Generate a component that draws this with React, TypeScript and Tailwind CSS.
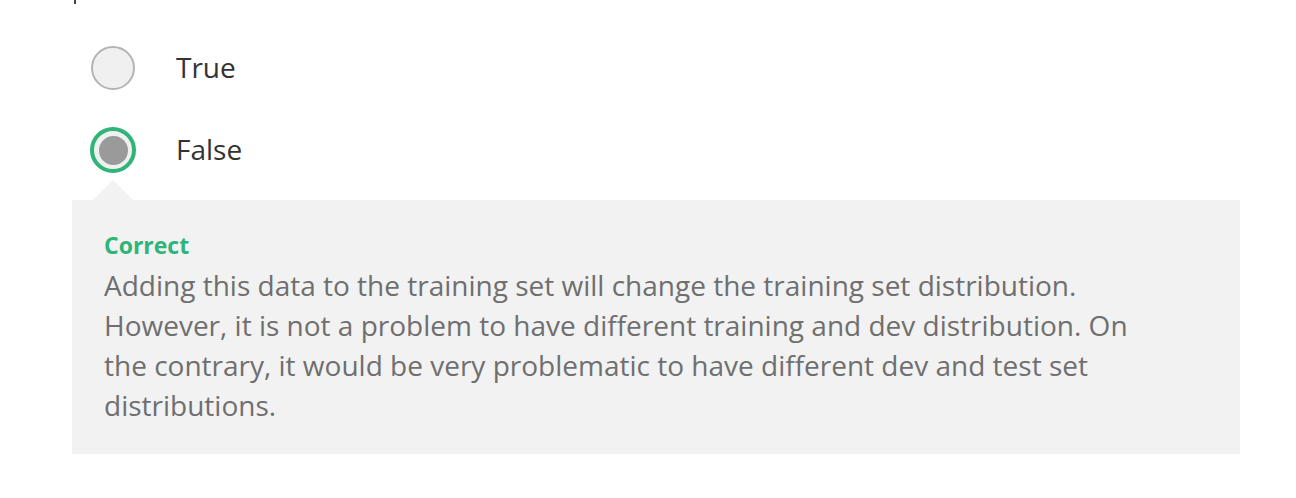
import React from "react";

export default function App() {
  return (
    <div className="bg-white w-[1296px] h-[498px] overflow-hidden relative" style={{ fontFamily: '"Open Sans", sans-serif' }}>
      <div className="absolute left-[74px] top-0 w-[2px] h-[4px] bg-[#444]" />
      <div className="pl-[72px] pr-[56px] pt-[27px]">
        <div className="pl-[19px]">
          <div className="h-[82px] flex items-center">
            <div className="w-[44px] h-[44px] rounded-full border-2 border-[#b4b4b4] bg-[#f0f0f0] shrink-0" />
            <span className="ml-[41px] -mt-[2px] text-[28px] leading-[40px] text-[#333]">True</span>
          </div>
          <div className="h-[82px] flex items-center">
            <div className="w-[46px] h-[46px] -ml-[1px] rounded-full border-4 border-[#2fb47a] bg-[#f0f0f0] shrink-0 flex items-center justify-center">
              <div className="w-[29px] h-[29px] rounded-full bg-[#9a9a9a]" />
            </div>
            <span className="ml-[40px] -mt-[2px] text-[28px] leading-[40px] text-[#333]">False</span>
          </div>
        </div>
        <div className="mt-[9px] relative bg-[#f2f2f2] pl-[32px] pr-[32px] pt-[25px] pb-[29px]">
          <div className="absolute left-[21px] -top-[20px] w-0 h-0 border-l-[20px] border-r-[20px] border-b-[20px] border-l-transparent border-r-transparent border-b-[#f2f2f2]" />
          <div className="text-[23px] font-bold text-[#2fb47a] leading-[40px]">Correct</div>
          <p className="text-[28px] leading-[40px] text-[#6f6f6f] max-w-[1040px]">
            Adding this data to the training set will change the training set distribution. However, it is not a problem to have different training and dev distribution. On the contrary, it would be very problematic to have different dev and test set distributions.
          </p>
        </div>
      </div>
    </div>
  );
}
